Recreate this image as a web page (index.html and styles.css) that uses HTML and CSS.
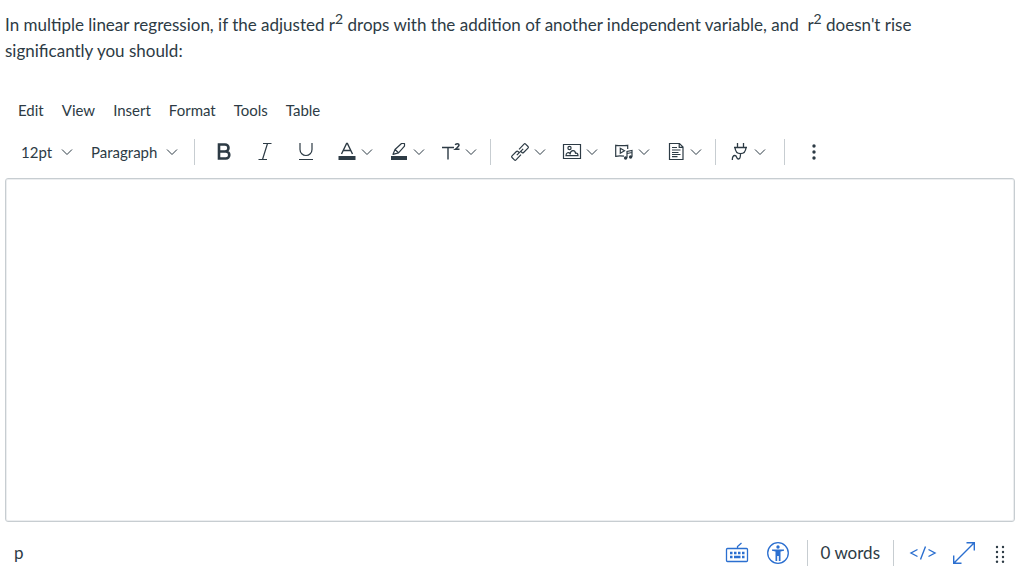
FILE: index.html
```html
<!DOCTYPE html>
<html lang="en">
<head>
  <meta charset="UTF-8">
  <meta name="viewport" content="width=device-width, initial-scale=1.0">
  <title>Quiz Question</title>
  <link rel="stylesheet" href="styles.css">
</head>
<body>
  <svg class="sprite" aria-hidden="true">
    <symbol id="chevron" viewBox="0 0 12 12">
      <path d="M1 3.5 6 8.5 11 3.5" fill="none" stroke="currentColor"/>
    </symbol>
  </svg>

  <p class="question">In multiple linear regression, if the adjusted r<sup>2</sup> drops with the addition of another independent variable, and&nbsp; r<sup>2</sup> doesn't rise significantly you should:</p>

  <div class="editor">
    <div class="menubar">
      <button type="button">Edit</button>
      <button type="button">View</button>
      <button type="button">Insert</button>
      <button type="button">Format</button>
      <button type="button">Tools</button>
      <button type="button">Table</button>
    </div>

    <div class="toolbar">
      <div class="group group-selects">
        <div class="picker">
          <select aria-label="Font size"><option>12pt</option></select>
          <svg class="chevron"><use href="#chevron"/></svg>
        </div>
        <div class="picker">
          <select aria-label="Block format"><option>Paragraph</option></select>
          <svg class="chevron"><use href="#chevron"/></svg>
        </div>
      </div>

      <div class="group group-text">
        <button type="button" class="tool" aria-label="Bold">
          <svg class="icon" viewBox="0 0 20 20"><path d="M5 2.5h6a3.2 3.2 0 0 1 0 7H5zM5 9.5h6.8a3.5 3.5 0 0 1 0 7H5z" fill="none" stroke="currentColor" stroke-width="2.6"/></svg>
        </button>
        <button type="button" class="tool" aria-label="Italic">
          <svg class="icon" viewBox="0 0 20 20"><path d="M8 1.5h8.500M3.500 17.500h8.500M12.500 1.500l-5 16" fill="none" stroke="currentColor" stroke-width="1.200"/></svg>
        </button>
        <button type="button" class="tool" aria-label="Underline">
          <svg class="icon" viewBox="0 0 20 20"><path d="M4 1v6.500a6 6 0 0 0 12 0V1M3 17.500h14" fill="none" stroke="currentColor" stroke-width="1.200"/></svg>
        </button>
      </div>

      <div class="group group-color">
        <button type="button" class="tool split" aria-label="Text color">
          <svg class="icon" viewBox="0 0 20 20"><path d="M4.500 12 9.600 1.500h.8L15.500 12M6.500 8.500h7" fill="none" stroke="currentColor" stroke-width="1.400"/><path d="M1.500 14h17v4h-17z" fill="currentColor"/></svg>
          <svg class="chevron"><use href="#chevron"/></svg>
        </button>
        <button type="button" class="tool split" aria-label="Highlight color">
          <svg class="icon" viewBox="0 0 20 20"><path d="M4 12.300 6 7.500 12.500 1.500h3v2.600L9.500 10.800zM6 7.500l3.500 3.300" fill="none" stroke="currentColor" stroke-width="1.200" stroke-linejoin="round"/><path d="M2 14h16v4H2z" fill="currentColor"/></svg>
          <svg class="chevron"><use href="#chevron"/></svg>
        </button>
        <button type="button" class="tool split" aria-label="Superscript">
          <svg class="icon" viewBox="0 0 20 20"><path d="M1 5.500h12M7 5.500v12" fill="none" stroke="currentColor" stroke-width="1.400"/><path d="M14.300 3q.3-1.300 2-1.300 1.700 0 1.700 1.400Q18 4.400 14.300 7.300H18.500" fill="none" stroke="currentColor" stroke-width="1.500"/></svg>
          <svg class="chevron"><use href="#chevron"/></svg>
        </button>
      </div>

      <div class="group group-insert">
        <button type="button" class="tool split" aria-label="Link">
          <svg class="icon" viewBox="0 0 20 20"><g fill="none" stroke="currentColor" stroke-width="1.200"><path d="M9 7.300 14 2.100q.8-.8 1.600 0L18 4.500q.8.800 0 1.600L13.600 10.500q-.8.800-1.600 0L10.800 9.300"/><path d="M11 12.700 6 17.900q-.8.800-1.600 0L2 15.500q-.8-.8 0-1.600L6.400 9.500q.8-.8 1.600 0L9.200 10.700"/><path d="M6.800 13.200l6.400-6.400"/></g></svg>
          <svg class="chevron"><use href="#chevron"/></svg>
        </button>
        <button type="button" class="tool split" aria-label="Image">
          <svg class="icon" viewBox="0 0 20 20"><g fill="none" stroke="currentColor" stroke-width="1.200"><path d="M1.500 2.500h17v14h-17z"/><circle cx="7.500" cy="6" r="1.600"/><path d="M4 13.600c0-3 2.800-4 4-1.900 1-4 5-4 5.500-.5 1.500-.5 2.500.5 2.500 2.400zM6.500 11q1.500-.4 2 1.200"/></g></svg>
          <svg class="chevron"><use href="#chevron"/></svg>
        </button>
        <button type="button" class="tool split" aria-label="Media">
          <svg class="icon" viewBox="0 0 20 20"><g fill="none" stroke="currentColor" stroke-width="1.200"><path d="M10 14.200Q5.500 13.600 1.700 14.300V3.300q6 .8 12 0V7"/><path d="M6.300 6.300v5L10.500 8.800z"/><path d="M13 15.800V9.500l5-1v6.300M13 11.500l5-1"/></g><circle cx="11.600" cy="16" r="1.700" fill="currentColor"/><circle cx="16.600" cy="15" r="1.700" fill="currentColor"/></svg>
          <svg class="chevron"><use href="#chevron"/></svg>
        </button>
        <button type="button" class="tool split" aria-label="Document">
          <svg class="icon" viewBox="0 0 20 20"><g fill="none" stroke="currentColor" stroke-width="1.200"><path d="M3.500 1.500h10l3.500 3.500v12.500H3.500zM13.200 1.500v3.800H17"/><path d="M6 5.500h5M6 8h8.500M6 10.500h6.500M6 12.500h8.500M6 14.700h5.500"/></g></svg>
          <svg class="chevron"><use href="#chevron"/></svg>
        </button>
      </div>

      <div class="group group-apps">
        <button type="button" class="tool split" aria-label="Apps">
          <svg class="icon" viewBox="0 0 20 20"><path d="M7.500 1v4.500M13.500 1v4.500M4 5.500h13M5 5.500q.5 6.200 5.500 6.200T16 5.500M10.500 11.700c0 3 0 5.300-2 5.300-2.500 0-1.200-3.500-3.600-3.500-1.700 0-2.600 1.500-2.600 4.500" fill="none" stroke="currentColor" stroke-width="1.300"/></svg>
          <svg class="chevron"><use href="#chevron"/></svg>
        </button>
      </div>

      <div class="group group-more">
        <button type="button" class="tool" aria-label="More">
          <svg class="icon" viewBox="0 0 20 20" fill="currentColor"><circle cx="10" cy="4" r="1.700"/><circle cx="10" cy="10" r="1.700"/><circle cx="10" cy="16" r="1.700"/></svg>
        </button>
      </div>
    </div>

    <textarea class="content" aria-label="Rich content editor"></textarea>

    <div class="statusbar">
      <span class="path">p</span>
      <div class="status-part">
        <button type="button" class="status-button" aria-label="Keyboard shortcuts">
          <svg class="status-icon" viewBox="0 0 24 24"><path d="M2.500 7.500q-1 0-1 1v11q0 1 1 1h19q1 0 1-1v-11q0-1-1-1zM12.500 7.500V5.500l4-3.500" fill="none" stroke="currentColor" stroke-width="1.300"/><path d="M5 12h2.500M9 12h2.500M13 12h2.500M17 12h2.500M5 16h2.500M9 16h6.500M17 16h2.500" fill="none" stroke="currentColor" stroke-width="2.400"/></svg>
        </button>
        <button type="button" class="status-button" aria-label="Accessibility checker">
          <svg class="status-icon" viewBox="0 0 24 24"><circle cx="12" cy="12" r="10.300" fill="none" stroke="currentColor" stroke-width="1.300"/><circle cx="12" cy="6" r="1.700" fill="currentColor"/><path d="M6 8.500h12v1.300l-3.500.8V20h-1.700v-5h-1.600v5H9.500v-9.400L6 9.800z" fill="currentColor"/></svg>
        </button>
      </div>
      <div class="status-part words">
        <button type="button">0 words</button>
      </div>
      <div class="status-part tools">
        <button type="button" class="status-button" aria-label="HTML editor">
          <svg class="code-icon" viewBox="0 0 28 24"><path d="M8.500 8.500 2 12l6.500 3.500M19.500 8.500 26 12l-6.500 3.500M16.500 5.500l-5 13" fill="none" stroke="currentColor" stroke-width="1.400"/></svg>
        </button>
        <button type="button" class="status-button" aria-label="Fullscreen">
          <svg class="status-icon" viewBox="0 0 24 24"><path d="M2 22 22 2M14.500 1.700h7.800v7.800M1.700 14.500v7.800h7.800" fill="none" stroke="currentColor" stroke-width="1.400"/></svg>
        </button>
        <button type="button" class="grip" aria-label="Resize">
          <svg class="grip-icon" viewBox="0 0 10 20" fill="currentColor"><circle cx="2" cy="4" r="1.200"/><circle cx="8" cy="4" r="1.200"/><circle cx="2" cy="9" r="1.200"/><circle cx="8" cy="9" r="1.200"/><circle cx="2" cy="14" r="1.200"/><circle cx="8" cy="14" r="1.200"/><circle cx="2" cy="18.800" r="1.200"/><circle cx="8" cy="18.800" r="1.200"/></svg>
        </button>
      </div>
    </div>
  </div>
</body>
</html>
```

FILE: styles.css
```css
* {
  box-sizing: border-box;
}

body {
  display: flex;
  flex-direction: column;
  min-height: 100vh;
  margin: 0;
  padding: 12px 9px 0 5px;
  background-color: #fff;
  color: #2d3b45;
  font-family: Lato, sans-serif;
  font-size: 17px;
}

button,
select {
  margin: 0;
  padding: 0;
  border: none;
  background: none;
  color: inherit;
  font: inherit;
  cursor: pointer;
}

svg {
  display: block;
}

.sprite {
  display: none;
}

.question {
  margin: 0;
  padding-right: 24px;
  line-height: 26px;
}

.question sup {
  font-size: 14px;
  line-height: 0;
}

.editor {
  display: flex;
  flex-direction: column;
  flex: 1;
  padding-top: 33px;
}

/* Menu and toolbar */
.menubar {
  display: flex;
  gap: 18px;
  padding: 0 13px;
  font-size: 15px;
  line-height: 26px;
}

.toolbar {
  display: flex;
  padding: 16px 0 13px 16px;
  font-size: 15px;
}

.group {
  display: flex;
  align-items: center;
  height: 26px;
  border-right: 1px solid #c7cdd1;
}

.group-selects {
  gap: 18px;
  padding-right: 16px;
}

.group-text {
  padding: 0 3px 0 8px;
  border-right: none;
}

.group-color {
  padding-right: 5px;
}

.group-insert {
  padding: 0 5px 0 11px;
}

.group-apps {
  padding: 0 10px 0 6px;
}

.group-more {
  padding-left: 8px;
  border-right: none;
}

/* The chevron shares the select's grid cell */
.picker {
  display: grid;
  align-items: center;
}

.picker select {
  grid-area: 1 / 1;
  padding: 0 20px 0 0;
  appearance: none;
}

.picker .chevron {
  grid-area: 1 / 1;
  justify-self: end;
  pointer-events: none;
}

.tool {
  display: flex;
  align-items: center;
  justify-content: center;
  gap: 4px;
  width: 41px;
  height: 26px;
}

.split {
  width: 52px;
}

.icon {
  width: 20px;
  height: 20px;
}

.chevron {
  width: 12px;
  height: 12px;
}

/* Editing area */
.content {
  flex: 1;
  width: 100%;
  padding: 12px;
  border: 1px solid #c7cdd1;
  border-radius: 3px;
  box-shadow: inset 0 0 0 1px #eceef0;
  color: inherit;
  font: inherit;
  resize: none;
}

/* Status bar */
.statusbar {
  display: flex;
  align-items: center;
  padding: 18px 10px 18px 9px;
  line-height: 24px;
}

.path {
  flex: 1;
}

.status-part {
  display: flex;
  align-items: center;
  gap: 17px;
  height: 26px;
}

.words {
  margin: 0 15px 0 17px;
  padding: 0 13px;
  border: solid #c7cdd1;
  border-width: 0 1px;
}

.tools {
  gap: 15px;
}

.status-button {
  color: #2b6fd0;
}

.status-icon {
  width: 24px;
  height: 24px;
}

.code-icon {
  width: 28px;
  height: 24px;
}

.grip {
  padding-left: 4px;
}

.grip-icon {
  width: 10px;
  height: 20px;
}
```
